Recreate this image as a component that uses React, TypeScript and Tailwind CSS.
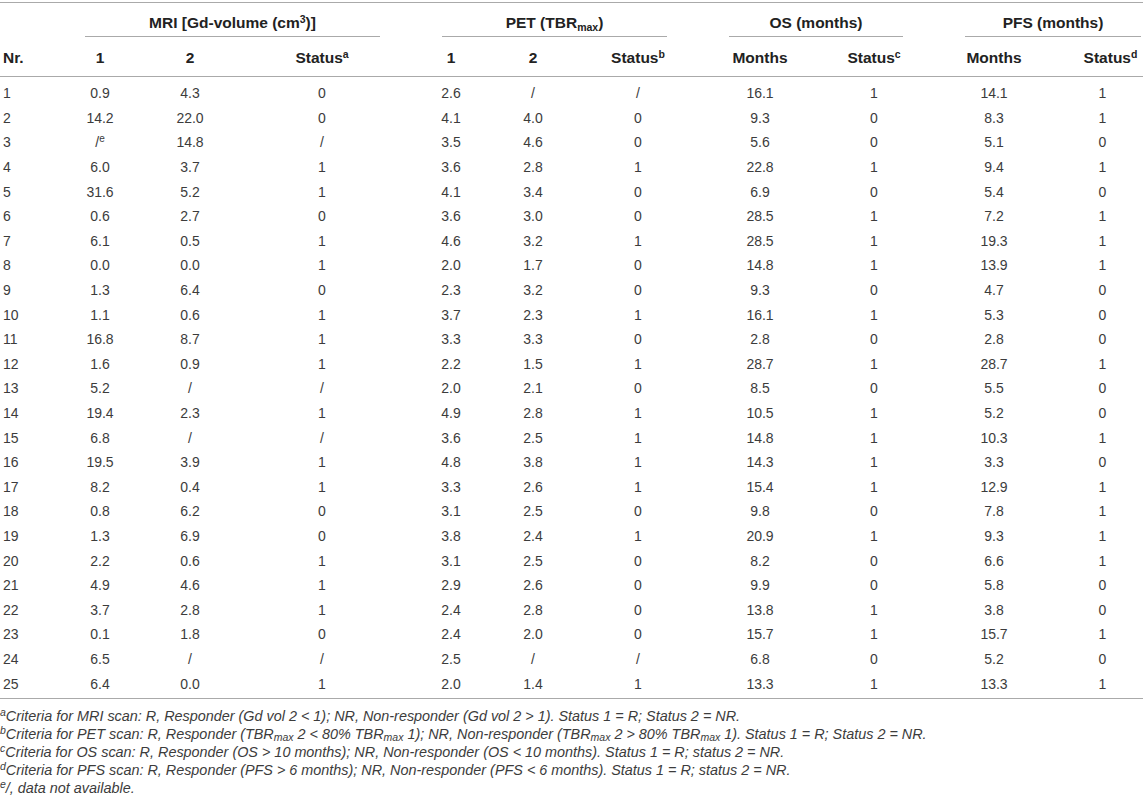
const rows: string[][] = [
  ["1", "0.9", "4.3", "0", "2.6", "/", "/", "16.1", "1", "14.1", "1"],
  ["2", "14.2", "22.0", "0", "4.1", "4.0", "0", "9.3", "0", "8.3", "1"],
  ["3", "/e", "14.8", "/", "3.5", "4.6", "0", "5.6", "0", "5.1", "0"],
  ["4", "6.0", "3.7", "1", "3.6", "2.8", "1", "22.8", "1", "9.4", "1"],
  ["5", "31.6", "5.2", "1", "4.1", "3.4", "0", "6.9", "0", "5.4", "0"],
  ["6", "0.6", "2.7", "0", "3.6", "3.0", "0", "28.5", "1", "7.2", "1"],
  ["7", "6.1", "0.5", "1", "4.6", "3.2", "1", "28.5", "1", "19.3", "1"],
  ["8", "0.0", "0.0", "1", "2.0", "1.7", "0", "14.8", "1", "13.9", "1"],
  ["9", "1.3", "6.4", "0", "2.3", "3.2", "0", "9.3", "0", "4.7", "0"],
  ["10", "1.1", "0.6", "1", "3.7", "2.3", "1", "16.1", "1", "5.3", "0"],
  ["11", "16.8", "8.7", "1", "3.3", "3.3", "0", "2.8", "0", "2.8", "0"],
  ["12", "1.6", "0.9", "1", "2.2", "1.5", "1", "28.7", "1", "28.7", "1"],
  ["13", "5.2", "/", "/", "2.0", "2.1", "0", "8.5", "0", "5.5", "0"],
  ["14", "19.4", "2.3", "1", "4.9", "2.8", "1", "10.5", "1", "5.2", "0"],
  ["15", "6.8", "/", "/", "3.6", "2.5", "1", "14.8", "1", "10.3", "1"],
  ["16", "19.5", "3.9", "1", "4.8", "3.8", "1", "14.3", "1", "3.3", "0"],
  ["17", "8.2", "0.4", "1", "3.3", "2.6", "1", "15.4", "1", "12.9", "1"],
  ["18", "0.8", "6.2", "0", "3.1", "2.5", "0", "9.8", "0", "7.8", "1"],
  ["19", "1.3", "6.9", "0", "3.8", "2.4", "1", "20.9", "1", "9.3", "1"],
  ["20", "2.2", "0.6", "1", "3.1", "2.5", "0", "8.2", "0", "6.6", "1"],
  ["21", "4.9", "4.6", "1", "2.9", "2.6", "0", "9.9", "0", "5.8", "0"],
  ["22", "3.7", "2.8", "1", "2.4", "2.8", "0", "13.8", "1", "3.8", "0"],
  ["23", "0.1", "1.8", "0", "2.4", "2.0", "0", "15.7", "1", "15.7", "1"],
  ["24", "6.5", "/", "/", "2.5", "/", "/", "6.8", "0", "5.2", "0"],
  ["25", "6.4", "0.0", "1", "2.0", "1.4", "1", "13.3", "1", "13.3", "1"],
]

const grid =
  "grid grid-cols-[70px_60px_120px_144px_114px_50px_160px_84px_144px_96px_101px]"

function Cell({ value, col }: { value: string; col: number }) {
  if (col === 0) {
    return <div className="pl-[3px] text-left">{value}</div>
  }
  const text =
    value === "/e" ? (
      <>
        /<sup className="text-[10px]">e</sup>
      </>
    ) : (
      value
    )
  return <div className={col === 10 ? "pl-[20px] text-center" : "text-center"}>{text}</div>
}

function Sup({ children }: { children: string }) {
  return <sup className="text-[10.5px] leading-none">{children}</sup>
}

function Max() {
  return <sub className="text-[10.5px] leading-none">max</sub>
}

export default function App() {
  return (
    <div className="w-[1143px] bg-white font-['Liberation_Sans',Arial,sans-serif] text-[14px] text-[#3c3c3c]">
      <div className="mt-[2px] h-px bg-[#aaa]" />

      {/* group headers */}
      <div className={`${grid} text-[15.5px] font-bold text-[#222]`}>
        <div />
        <div className="col-span-3">
          <div className="ml-[15px] mr-[14px] h-[34px] border-b border-[#aaa] pt-[10px] text-center leading-[20px]">
            MRI [Gd-volume (cm<Sup>3</Sup>)]
          </div>
        </div>
        <div className="col-span-3">
          <div className="ml-[48px] mr-[51px] h-[34px] border-b border-[#aaa] pt-[10px] text-center leading-[20px]">
            PET (TBR<Max />)
          </div>
        </div>
        <div className="col-span-2">
          <div className="ml-[11px] mr-[43px] h-[34px] border-b border-[#aaa] pt-[10px] text-center leading-[20px]">
            OS (months)
          </div>
        </div>
        <div className="col-span-2">
          <div className="ml-[19px] mr-[2px] h-[34px] border-b border-[#aaa] pt-[10px] text-center leading-[20px]">
            PFS (months)
          </div>
        </div>
      </div>

      {/* column headers */}
      <div className={`${grid} h-[39px] items-center pt-[2px] text-[15.5px] font-bold text-[#222]`}>
        <div className="pl-[3px]">Nr.</div>
        <div className="text-center">1</div>
        <div className="text-center">2</div>
        <div className="text-center">
          Status<Sup>a</Sup>
        </div>
        <div className="text-center">1</div>
        <div className="text-center">2</div>
        <div className="text-center">
          Status<Sup>b</Sup>
        </div>
        <div className="text-center">Months</div>
        <div className="text-center">
          Status<Sup>c</Sup>
        </div>
        <div className="text-center">Months</div>
        <div className="pl-[36px] text-center">
          Status<Sup>d</Sup>
        </div>
      </div>
      <div className="h-px bg-[#aaa]" />

      {/* body */}
      <div className="pt-[4px] pb-[2px]">
        {rows.map((row) => (
          <div key={row[0]} className={`${grid} h-[24.6px] items-center leading-[18px]`}>
            {row.map((v, i) => (
              <Cell key={i} value={v} col={i} />
            ))}
          </div>
        ))}
      </div>
      <div className="h-px bg-[#aaa]" />

      {/* footnotes */}
      <div className="mt-[8px] text-[14.4px] italic leading-[18px] text-[#3c3c3c]">
        <p>
          <Sup>a</Sup>Criteria for MRI scan: R, Responder (Gd vol 2 &lt; 1); NR, Non-responder (Gd vol 2 &gt; 1). Status 1 = R; Status 2 = NR.
        </p>
        <p>
          <Sup>b</Sup>Criteria for PET scan: R, Responder (TBR<Max /> 2 &lt; 80% TBR<Max /> 1); NR, Non-responder (TBR<Max /> 2 &gt; 80% TBR<Max /> 1). Status 1 = R; Status 2 = NR.
        </p>
        <p>
          <Sup>c</Sup>Criteria for OS scan: R, Responder (OS &gt; 10 months); NR, Non-responder (OS &lt; 10 months). Status 1 = R; status 2 = NR.
        </p>
        <p>
          <Sup>d</Sup>Criteria for PFS scan: R, Responder (PFS &gt; 6 months); NR, Non-responder (PFS &lt; 6 months). Status 1 = R; status 2 = NR.
        </p>
        <p>
          <Sup>e</Sup>/, data not available.
        </p>
      </div>
    </div>
  )
}
